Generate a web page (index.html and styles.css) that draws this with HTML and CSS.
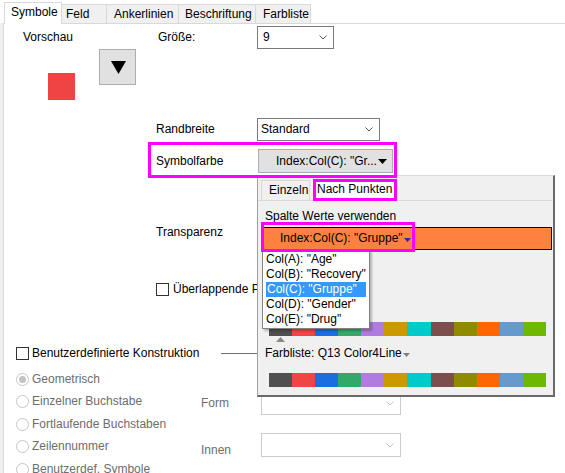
FILE: index.html
```html
<!DOCTYPE html>
<html lang="de">
<head>
<meta charset="utf-8">
<title>Symbole</title>
<link rel="stylesheet" href="styles.css">
</head>
<body>
<div class="tabs">
  <div class="tab tab-active t-symbole">Symbole</div>
  <div class="tab t-feld">Feld</div>
  <div class="tab t-anker">Ankerlinien</div>
  <div class="tab t-beschr">Beschriftung</div>
  <div class="tab t-farb">Farbliste</div>
</div>
<div class="pane">
  <div class="top">
    <div class="preview">
      <div>Vorschau</div>
      <div class="swatch"></div>
    </div>
    <div class="symbtn">
      <svg width="15" height="14" viewBox="0 0 15 14"><polygon points="0,1 15,1 7.5,14" fill="#000"/></svg>
    </div>
    <div class="size">
      <div class="size-lbl">Größe:</div>
      <div class="combo size-combo"><span>9</span><svg class="chev" width="8" height="5" viewBox="0 0 8 5"><polyline points="0.5,0.5 4,4 7.5,0.5" fill="none" stroke="#555" stroke-width="1"/></svg></div>
    </div>
  </div>

  <div class="row row-rand">
    <div class="flabel-w">Randbreite</div>
    <div class="combo rand-combo"><span>Standard</span><svg class="chev" width="8" height="5" viewBox="0 0 8 5"><polyline points="0.5,0.5 4,4 7.5,0.5" fill="none" stroke="#555" stroke-width="1"/></svg></div>
  </div>

  <div class="row row-farbe">
    <div class="farbe-lbl">Symbolfarbe</div>
    <div class="colorbtn"><span>Index:Col(C): "Gr...</span><svg width="9" height="5" viewBox="0 0 9 5"><polygon points="0,0 9,0 4.5,5" fill="#000"/></svg></div>
  </div>

  <div class="lbl-trans">Transparenz</div>

  <div class="row chk-over">
    <span class="chk"></span><span class="over-txt">Überlappende Punkte versetzen</span>
  </div>

  <div class="row grp">
    <span class="chk"></span><span>Benutzerdefinierte Konstruktion</span><span class="grpline"></span>
  </div>

  <div class="lower">
    <div class="radios">
      <div class="radio-item"><span class="radio on"></span>Geometrisch</div>
      <div class="radio-item"><span class="radio"></span>Einzelner Buchstabe</div>
      <div class="radio-item"><span class="radio"></span>Fortlaufende Buchstaben</div>
      <div class="radio-item"><span class="radio"></span>Zeilennummer</div>
      <div class="radio-item"><span class="radio"></span>Benutzerdef. Symbole</div>
    </div>
    <div class="formcol">
      <div class="frow frow-form">
        <div class="dlbl">Form</div>
        <div class="combo dis-combo"><span></span><svg class="chev" width="8" height="5" viewBox="0 0 8 5"><polyline points="0.5,0.5 4,4 7.5,0.5" fill="none" stroke="#c4c4c4" stroke-width="1"/></svg></div>
      </div>
      <div class="frow frow-innen">
        <div class="dlbl dlbl-innen">Innen</div>
        <div class="combo dis-combo innen-combo"><span></span><svg class="chev" width="8" height="5" viewBox="0 0 8 5"><polyline points="0.5,0.5 4,4 7.5,0.5" fill="none" stroke="#c4c4c4" stroke-width="1"/></svg></div>
      </div>
    </div>
  </div>
</div>

<div class="popup">
  <div class="ptabs">
    <div class="ptab">Einzeln</div>
    <div class="ptab ptab-on">Nach Punkten</div>
  </div>
  <div class="plabel">Spalte Werte verwenden</div>
  <div class="obar">
    <span>Index:Col(C): "Gruppe"</span><svg class="otri" width="7" height="4" viewBox="0 0 7 4"><polygon points="0,0 7,0 3.5,4" fill="#1f2f9c"/></svg>
    <div class="mark"></div>
  </div>
  <div class="cbar">
    <span class="sw" style="background:#505050"></span>
    <span class="sw" style="background:#f04545"></span>
    <span class="sw" style="background:#1a6fdf"></span>
    <span class="sw" style="background:#34a86a"></span>
    <span class="sw" style="background:#b07ce0"></span>
    <span class="sw" style="background:#cc9a00"></span>
    <span class="sw" style="background:#00cbcb"></span>
    <span class="sw" style="background:#7c4e4e"></span>
    <span class="sw" style="background:#8f8b00"></span>
    <span class="sw" style="background:#ff6600"></span>
    <span class="sw" style="background:#6699cc"></span>
    <span class="sw" style="background:#6db800"></span>
  </div>
  <div class="marker"><svg width="9" height="5" viewBox="0 0 9 5"><polygon points="4.5,0 9,5 0,5" fill="#8a8a8a"/></svg></div>
  <div class="flabel">Farbliste: Q13 Color4Line<svg class="ftri" width="7" height="4" viewBox="0 0 7 4"><polygon points="0,0 7,0 3.5,4" fill="#808080"/></svg></div>
  <div class="cbar cbar2">
    <span class="sw" style="background:#505050"></span>
    <span class="sw" style="background:#f04545"></span>
    <span class="sw" style="background:#1a6fdf"></span>
    <span class="sw" style="background:#34a86a"></span>
    <span class="sw" style="background:#b07ce0"></span>
    <span class="sw" style="background:#cc9a00"></span>
    <span class="sw" style="background:#00cbcb"></span>
    <span class="sw" style="background:#7c4e4e"></span>
    <span class="sw" style="background:#8f8b00"></span>
    <span class="sw" style="background:#ff6600"></span>
    <span class="sw" style="background:#6699cc"></span>
    <span class="sw" style="background:#6db800"></span>
  </div>

  <div class="dlist">
    <div class="ditem">Col(A): "Age"</div>
    <div class="ditem">Col(B): "Recovery"</div>
    <div class="ditem ditem-sel">Col(C): "Gruppe"</div>
    <div class="ditem">Col(D): "Gender"</div>
    <div class="ditem">Col(E): "Drug"</div>
  </div>
</div>
</body>
</html>
```

FILE: styles.css
```css
* { box-sizing: border-box; }
html, body { margin: 0; padding: 0; }
body {
  width: 565px;
  height: 473px;
  overflow: hidden;
  position: relative;
  font-family: "Liberation Sans", Arial, sans-serif;
  font-size: 12px;
  line-height: 15px;
  color: #000;
  background: linear-gradient(to right, #f0f0f0 0 3px, #fff 3px);
}

/* main tabs */
.tabs {
  display: flex;
  align-items: flex-end;
  height: 23px;
  padding-left: 4px;
  background: #fff;
}
.tab {
  height: 19px;
  border-top: 1px solid #d9d9d9;
  border-right: 1px solid #d9d9d9;
  background: #f0f0f0;
  padding-top: 2px;
  white-space: nowrap;
}
.tab-active {
  height: 22px;
  margin-bottom: -1px;
  background: #fff;
  border-left: 1px solid #d9d9d9;
  position: relative;
  z-index: 1;
  padding-top: 2px;
}
.t-symbole { width: 58px; padding-left: 6px; }
.t-feld { width: 45px; padding-left: 4px; }
.t-anker { width: 72px; padding-left: 7px; }
.t-beschr { width: 77px; padding-left: 6px; }
.t-farb { width: 55px; padding-left: 7px; }

.pane {
  margin-left: 3px;
  border-left: 1px solid #d9d9d9;
  border-top: 1px solid #d9d9d9;
  height: 460px;
  background: #fff;
}

/* top area */
.top {
  display: flex;
  align-items: flex-start;
  height: 86px;
}
.preview {
  width: 95px;
  padding-left: 19px;
  padding-top: 6px;
}
.swatch {
  width: 27px;
  height: 27px;
  background: #f04343;
  margin: 28px 0 0 25px;
}
.symbtn {
  width: 37px;
  height: 36px;
  margin-top: 25px;
  background: #e1e1e1;
  border: 1px solid #adadad;
  display: flex;
  align-items: center;
  justify-content: center;
  padding-left: 2px;
}
.size {
  display: flex;
  align-items: flex-start;
  margin-left: 22px;
}
.size-lbl {
  width: 99px;
  padding-top: 6px;
}
.combo {
  display: flex;
  align-items: center;
  justify-content: space-between;
  height: 23px;
  border: 1px solid #7a7a7a;
  background: #fff;
  padding: 0 6px 0 5px;
}
.size-combo { width: 77px; margin-top: 2px; }

.row {
  display: flex;
  align-items: center;
}
.row-rand {
  margin-top: 8px;
  padding-left: 152px;
}
.flabel-w { width: 101px; }
.rand-combo { width: 123px; padding-left: 3px; }

.row-farbe {
  position: relative;
  z-index: 6;
  margin-top: 1px;
  margin-left: 144px;
  width: 249px;
  height: 36px;
  border: 3px solid #ff00ff;
  padding: 4px 1px 2px 5px;
}
.farbe-lbl { width: 102px; }
.colorbtn {
  width: 135px;
  height: 24px;
  background: #e1e1e1;
  border: 1px solid #adadad;
  display: flex;
  align-items: center;
  justify-content: space-between;
  padding: 0 5px 0 17px;
}

.lbl-trans {
  padding-left: 152px;
  margin-top: 47px;
}

.chk {
  width: 13px;
  height: 13px;
  border: 1px solid #333;
  background: #fff;
  flex: none;
  margin-right: 4px;
}
.chk-over {
  margin-top: 42px;
  padding-left: 152px;
  width: 253px;
  overflow: hidden;
  white-space: nowrap;
}
.over-txt {
  overflow: hidden;
  flex: 1;
  min-width: 0;
}
.grp {
  margin-top: 49px;
  padding-left: 12px;
  white-space: nowrap;
}
.grp .chk { margin-right: 3px; }
.grpline {
  width: 50px;
  height: 1px;
  background: #707070;
  margin-left: 22px;
}

/* lower disabled area */
.lower {
  display: flex;
  margin-top: 7px;
  padding-left: 12px;
  color: #6d6d6d;
}
.radios { width: 185px; }
.radio-item {
  height: 22.5px;
  display: flex;
  align-items: center;
  white-space: nowrap;
}
.radio {
  width: 13px;
  height: 13px;
  border-radius: 50%;
  border: 1px solid #c6c6c6;
  background: #fff;
  margin-right: 3px;
  flex: none;
  display: flex;
  align-items: center;
  justify-content: center;
}
.radio.on::after {
  content: "";
  width: 7px;
  height: 7px;
  border-radius: 50%;
  background: #c2c2c2;
}
.formcol { width: 200px; }
.frow { display: flex; }
.frow-form {
  align-items: center;
  margin-top: 24px;
}
.frow-innen {
  align-items: flex-start;
  margin-top: 18px;
}
.dlbl { width: 60px; }
.dlbl-innen { padding-top: 10px; }
.dis-combo {
  width: 140px;
  border-color: #cccccc;
}
.innen-combo { height: 24px; }

/* popup */
.popup {
  position: absolute;
  left: 257px;
  top: 175px;
  width: 298px;
  height: 222px;
  z-index: 5;
  background: #f0f0f0;
  border-top: 1px solid #dadada;
  border-left: 1px solid #a0a0a0;
  border-right: 2px solid #6a6a6a;
  border-bottom: 2px solid #6a6a6a;
}
.ptabs {
  display: flex;
  align-items: flex-end;
  height: 25px;
  border-bottom: 1px solid #d9d9d9;
  margin-right: 1px;
  padding-left: 3px;
}
.ptab {
  width: 49px;
  height: 20px;
  border: 1px solid #d9d9d9;
  border-bottom: none;
  background: #f0f0f0;
  padding: 2px 0 0 7px;
  white-space: nowrap;
}
.ptab-on {
  position: relative;
  z-index: 4;
  width: 84px;
  height: 22px;
  margin-left: 3px;
  border: 3px solid #ff00ff;
  background: #fff;
  padding: 0 0 0 1px;
  margin-bottom: -1px;
}
.plabel {
  padding-left: 7px;
  margin-top: 8px;
}
.obar {
  position: relative;
  margin: 3px 1px 0 4px;
  height: 23px;
  border: 1px solid #00004f;
  background: #fd823f;
  display: flex;
  align-items: center;
  padding-left: 17px;
  white-space: nowrap;
}
.otri { margin-left: 1px; margin-top: 2px; }
.mark {
  position: absolute;
  left: -2px;
  top: -6px;
  width: 154px;
  height: 30px;
  border: 3px solid #ff00ff;
  z-index: 3;
}
.cbar {
  display: flex;
  width: 277px;
  height: 14px;
  margin: 72px 0 0 11px;
}
.cbar2 { margin-top: 12px; }
.sw { flex: 1; }
.marker {
  height: 6px;
  padding: 1px 0 0 18px;
  display: flex;
}
.flabel {
  padding-left: 7px;
  margin-top: 4px;
  display: flex;
  align-items: center;
  white-space: nowrap;
}
.ftri { margin-left: 1px; margin-top: 3px; }

.dlist {
  position: absolute;
  left: 4px;
  top: 74px;
  width: 108px;
  background: #fff;
  border: 1px solid #828282;
  padding: 1px 3px;
  box-shadow: 2px 2px 2px rgba(0, 0, 0, 0.25);
  z-index: 2;
}
.ditem {
  height: 15px;
  line-height: 15px;
  white-space: nowrap;
}
.ditem-sel {
  background: #3399ff;
  color: #fff;
  padding-left: 1px;
}
```
